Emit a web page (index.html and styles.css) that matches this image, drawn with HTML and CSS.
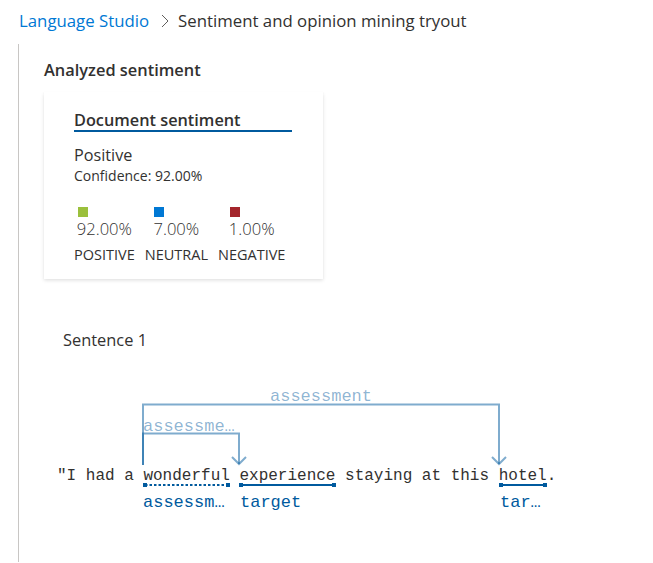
FILE: index.html
```html
<!DOCTYPE html>
<html lang="en">
<head>
<meta charset="utf-8">
<title>Sentiment and opinion mining tryout</title>
<link rel="stylesheet" href="styles.css">
</head>
<body>
<nav class="crumbs">
  <a class="crumb-link" href="#">Language Studio</a>
  <svg class="chev" width="10" height="14" viewBox="0 0 10 14"><polyline points="2,1 8,7 2,13" fill="none" stroke="#605e5c" stroke-width="1"/></svg>
  <span class="crumb-current">Sentiment and opinion mining tryout</span>
</nav>
<main class="results">
  <h2 class="section-title">Analyzed sentiment</h2>
  <div class="card">
    <div class="card-title">Document sentiment</div>
    <div class="overall">Positive</div>
    <div class="confidence">Confidence: 92.00%</div>
    <div class="scores">
      <div class="score">
        <div class="score-top"><span class="swatch pos"></span><span class="pct">92.00%</span></div>
        <span class="label">POSITIVE</span>
      </div>
      <div class="score">
        <div class="score-top"><span class="swatch neu"></span><span class="pct">7.00%</span></div>
        <span class="label">NEUTRAL</span>
      </div>
      <div class="score">
        <div class="score-top"><span class="swatch neg"></span><span class="pct">1.00%</span></div>
        <span class="label">NEGATIVE</span>
      </div>
    </div>
  </div>
  <div class="sentence-title">Sentence 1</div>
  <svg class="diagram" width="560" height="160" viewBox="44 370 560 160">
    <g fill="none" stroke="#005a9e" stroke-width="2" stroke-opacity="0.5">
      <polyline points="143,465 143,404.5 499,404.5 499,464"/>
      <polyline points="492,457 499,464 506,457"/>
      <polyline points="143,465 143,433.5 239,433.5 239,464"/>
      <polyline points="232,457 239,464 246,457"/>
    </g>
    <g class="arc-label">
      <text x="321" y="401" text-anchor="middle">assessment</text>
      <text x="143" y="431">assessme…</text>
    </g>
    <text class="sentence" x="57" y="480" xml:space="preserve">"I had a wonderful experience staying at this hotel.</text>
    <g stroke="#005a9e" stroke-width="2" fill="#005a9e">
      <line x1="145" y1="485" x2="228" y2="485" stroke-dasharray="2.5,2"/>
      <rect x="143" y="483" width="4" height="4" stroke="none"/>
      <rect x="226" y="483" width="4" height="4" stroke="none"/>
      <line x1="241" y1="485" x2="334" y2="485"/>
      <rect x="239" y="483" width="4" height="4" stroke="none"/>
      <rect x="332" y="483" width="4" height="4" stroke="none"/>
      <line x1="501" y1="485" x2="545" y2="485"/>
      <rect x="499" y="483" width="4" height="4" stroke="none"/>
      <rect x="543" y="483" width="4" height="4" stroke="none"/>
    </g>
    <g class="tag-label">
      <text x="143" y="507">assessm…</text>
      <text x="240" y="507">target</text>
      <text x="500" y="507">tar…</text>
    </g>
  </svg>
</main>
</body>
</html>
```
FILE: styles.css
```css
* { box-sizing: border-box; }
body {
  margin: 0;
  font-family: "Segoe UI", "Open Sans", sans-serif;
  color: #323130;
  background: #ffffff;
}
.crumbs {
  display: flex;
  align-items: center;
  height: 40px;
  padding: 1px 0 0 19px;
  font-size: 16.8px;
  line-height: 22px;
}
.crumb-link {
  color: #0078d4;
  text-decoration: none;
}
.chev {
  margin: 0 8px 0 11px;
  display: block;
}
.crumb-current { color: #323130; }
.results {
  margin: 4px 0 0 18px;
  height: 518px;
  border-left: 1px solid #c8c6c4;
  padding: 15px 0 0 25px;
}
.section-title {
  margin: 0;
  font-size: 16.4px;
  line-height: 22px;
  font-weight: 600;
}
.card {
  margin-top: 11.4px;
  width: 279px;
  height: 187px;
  padding: 15.6px 30px 0 30px;
  background: #fff;
  box-shadow: 0 1.6px 3.6px rgba(0,0,0,0.13), 0 0.3px 0.9px rgba(0,0,0,0.11);
}
.card-title {
  width: 218px;
  font-size: 16.3px;
  font-weight: 600;
  line-height: 18.5px;
  padding-top: 3.5px;
  border-bottom: 2px solid #005a9e;
}
.overall {
  margin-top: 12px;
  font-size: 16.2px;
  line-height: 22px;
}
.confidence {
  margin-top: 1px;
  font-size: 14px;
  line-height: 18px;
}
.scores {
  display: flex;
  gap: 10px;
  margin-top: 22.4px;
}
.score {
  display: flex;
  flex-direction: column;
  align-items: center;
}
.score-top {
  display: flex;
  flex-direction: column;
  align-items: flex-start;
}
.swatch {
  display: block;
  width: 10px;
  height: 10px;
  margin-left: 1px;
}
.swatch.pos { background: #9bc03c; }
.swatch.neu { background: #0078d4; }
.swatch.neg { background: #a4262c; }
.pct {
  font-size: 16.6px;
  line-height: 24px;
  font-weight: 300;
  color: #323130;
}
.label {
  margin-top: 4.4px;
  font-size: 14.5px;
  line-height: 18px;
}
.sentence-title {
  margin: 49.6px 0 0 19px;
  font-size: 16.4px;
  line-height: 22px;
}
.diagram {
  display: block;
  margin-top: 19.4px;
  overflow: visible;
}
.diagram text {
  font-family: "Liberation Mono", "DejaVu Sans Mono", monospace;
}
.sentence {
  font-size: 16px;
  fill: #323130;
}
.arc-label text {
  font-size: 17px;
  fill: #005a9e;
  fill-opacity: 0.45;
}
.tag-label text {
  font-size: 17px;
  fill: #005a9e;
}
```
